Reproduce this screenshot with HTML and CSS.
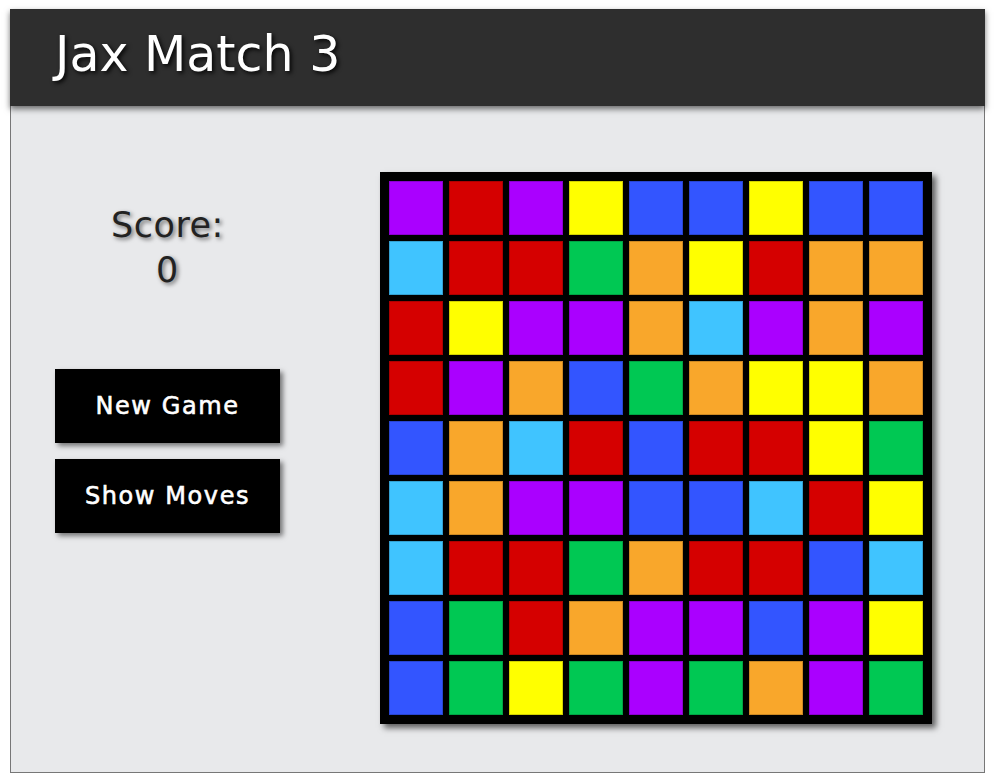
FILE: index.html
```html
<!DOCTYPE html>
<html>
<head>
<meta charset="utf-8">
<title>Jax Match 3</title>
<link rel="stylesheet" href="styles.css">
</head>
<body>
<div class="app">
  <header class="header"><h1 class="title">Jax Match 3</h1></header>
  <main class="main">
    <aside class="side">
      <div class="score">Score:<br>0</div>
      <button class="btn">New Game</button>
      <button class="btn">Show Moves</button>
    </aside>
    <div class="board">
      <div class="c p"></div><div class="c r"></div><div class="c p"></div><div class="c y"></div><div class="c b"></div><div class="c b"></div><div class="c y"></div><div class="c b"></div><div class="c b"></div>
      <div class="c l"></div><div class="c r"></div><div class="c r"></div><div class="c g"></div><div class="c o"></div><div class="c y"></div><div class="c r"></div><div class="c o"></div><div class="c o"></div>
      <div class="c r"></div><div class="c y"></div><div class="c p"></div><div class="c p"></div><div class="c o"></div><div class="c l"></div><div class="c p"></div><div class="c o"></div><div class="c p"></div>
      <div class="c r"></div><div class="c p"></div><div class="c o"></div><div class="c b"></div><div class="c g"></div><div class="c o"></div><div class="c y"></div><div class="c y"></div><div class="c o"></div>
      <div class="c b"></div><div class="c o"></div><div class="c l"></div><div class="c r"></div><div class="c b"></div><div class="c r"></div><div class="c r"></div><div class="c y"></div><div class="c g"></div>
      <div class="c l"></div><div class="c o"></div><div class="c p"></div><div class="c p"></div><div class="c b"></div><div class="c b"></div><div class="c l"></div><div class="c r"></div><div class="c y"></div>
      <div class="c l"></div><div class="c r"></div><div class="c r"></div><div class="c g"></div><div class="c o"></div><div class="c r"></div><div class="c r"></div><div class="c b"></div><div class="c l"></div>
      <div class="c b"></div><div class="c g"></div><div class="c r"></div><div class="c o"></div><div class="c p"></div><div class="c p"></div><div class="c b"></div><div class="c p"></div><div class="c y"></div>
      <div class="c b"></div><div class="c g"></div><div class="c y"></div><div class="c g"></div><div class="c p"></div><div class="c g"></div><div class="c o"></div><div class="c p"></div><div class="c g"></div>
    </div>
  </main>
</div>
</body>
</html>
```

FILE: styles.css
```css
* { box-sizing: border-box; }
html, body { margin: 0; padding: 0; background: #fff; }
body { font-family: "DejaVu Sans", Verdana, sans-serif; }

.app {
  width: 975px;
  margin: 9px 0 0 10px;
}

.header {
  position: relative;
  z-index: 1;
  height: 97px;
  background: #2e2e2e;
  padding: 18px 0 0 45px;
  box-shadow: 0 3px 6px rgba(0, 0, 0, 0.55);
}

.title {
  margin: 0;
  font-size: 49px;
  line-height: 56px;
  font-weight: normal;
  color: #fff;
  text-shadow: 2px 2px 4px rgba(0, 0, 0, 0.9);
}

.main {
  display: flex;
  align-items: flex-start;
  gap: 100px;
  background: #e8e9eb;
  border: 1px solid #777;
  border-top: none;
  padding: 66px 0 48px 44px;
}

.side {
  width: 225px;
  display: flex;
  flex-direction: column;
  gap: 16px;
}

.score {
  margin: 31px 0 60px;
  text-align: center;
  font-size: 35px;
  letter-spacing: 0.5px;
  line-height: 45px;
  color: #222;
  text-shadow: 2px 2px 4px rgba(0, 0, 0, 0.55);
}

.btn {
  width: 225px;
  height: 74px;
  border: none;
  background: #000;
  color: #fff;
  font-family: "DejaVu Sans", Verdana, sans-serif;
  font-size: 24px;
  font-weight: normal;
  letter-spacing: 1.6px;
  -webkit-text-stroke: 0.6px #fff;
  box-shadow: 3px 3px 5px rgba(0, 0, 0, 0.5);
  padding: 0;
}

.board {
  width: 552px;
  height: 552px;
  background: #000;
  padding: 9px;
  display: grid;
  grid-template-columns: repeat(9, 54px);
  grid-template-rows: repeat(9, 54px);
  gap: 6px;
  box-shadow: 4px 4px 6px rgba(0, 0, 0, 0.6);
}

.c { box-shadow: inset 0 0 0 1px rgba(0, 0, 0, 0.18); }
.p { background: #aa00ff; }
.r { background: #d50000; }
.y { background: #ffff00; }
.b { background: #3355ff; }
.l { background: #40c4ff; }
.g { background: #00c853; }
.o { background: #f9a72b; }
```
